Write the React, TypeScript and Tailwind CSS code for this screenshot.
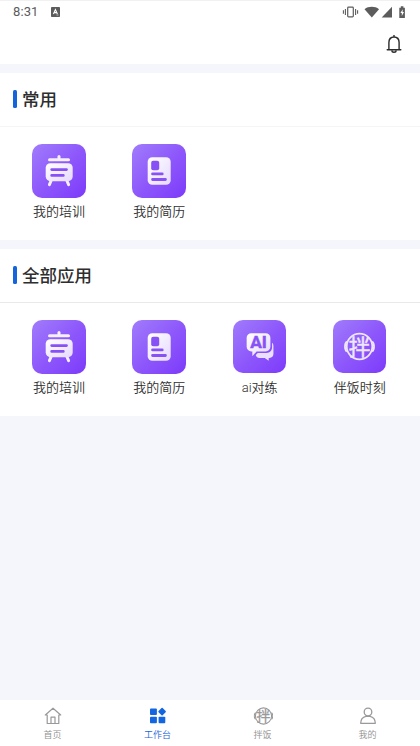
import type { ReactNode } from "react";

const FONT = "font-['Roboto','Noto_Sans_CJK_SC',sans-serif]";

function StatusBar() {
  return (
    <div className="flex h-[23px] items-center justify-between border-t border-[#f1f1f2] pl-[13px] pr-[12px] text-[#5c5c5c]">
      <div className="flex items-center gap-[13px]">
        <span className="text-[13px] leading-[22px] tracking-[0.1px]">8:31</span>
        <svg className="mb-[1px]" width="9" height="10" viewBox="0 0 9 10">
          <rect width="9" height="10" rx="0.8" fill="#5c5c5c" />
          <path d="M2.4 7 4.4 2.6 6.4 7M3.2 5.6h2.4" fill="none" stroke="#fff" strokeWidth="1.1" />
          <path d="M5.5 8h2" stroke="#ddd" strokeWidth="0.7" />
        </svg>
      </div>
      <svg className="mb-[1px]" width="66" height="14" viewBox="0 0 66 14" fill="#5c5c5c">
        <g fill="none" stroke="#5c5c5c">
          <rect x="5.7" y="2.2" width="5.6" height="9.6" rx="0.8" strokeWidth="1.2" />
          <path d="M3.4 4v6M1.4 5.3v3.4M13.6 4v6M15.6 5.3v3.4" strokeWidth="1.1" />
        </g>
        <path d="M22.5 4.2C26.5 1 33 1 37 4.2L29.8 12.6Z" />
        <path d="M50 1.8v10.7H39.7Z" />
        <path d="M57.3 2.7h1.5V1.2h2.6v1.5h1.5v10.2h-5.6z" />
        <path d="M60.7 4.2 58.4 8.1h1.4v3l2.2-4.2h-1.4z" fill="#fff" />
      </svg>
    </div>
  );
}

function Bell() {
  return (
    <svg width="16" height="20" viewBox="0 0 16 20" fill="none" stroke="#2b2b2b" strokeWidth="1.4">
      <path d="M1.2 15.8h13.6" strokeLinecap="round" />
      <path d="M2.9 15.6V8.6C2.9 5.2 5 3 8 3s5.1 2.2 5.1 5.6v7M8 1v2" />
      <path d="M5.8 16.4c.2 2.5 4.2 2.5 4.4 0" />
    </svg>
  );
}

function Tile({ small, children }: { small?: boolean; children: ReactNode }) {
  return (
    <div className="flex h-[54px] items-start justify-center">
      <div
        className={`${small ? "size-[53px]" : "size-[54px]"} overflow-hidden rounded-[10px] bg-linear-to-br from-[#a17bfb] via-[#8e58fb] to-[#7d39fa]`}
      >
        <svg className="block size-full" viewBox="0 0 54 54">
          <defs>
            <linearGradient id="pale" x1="0" y1="0" x2="1" y2="1">
              <stop offset="0" stopColor="#fff" />
              <stop offset="1" stopColor="#e6d9ff" />
            </linearGradient>
          </defs>
          {children}
        </svg>
      </div>
    </div>
  );
}

function Training() {
  return (
    <Tile>
      <g stroke="#f5efff" strokeLinecap="round" fill="none">
        <path d="M17.5 15.7h19" strokeWidth="3" />
        <path d="M27 12.6v3" strokeWidth="3" />
        <path d="m19 37-1.6 3.7M35 37l1.6 3.7" strokeWidth="3" />
      </g>
      <rect x="13.7" y="19.2" width="27" height="18" rx="4.6" fill="url(#pale)" />
      <path d="M19.7 25.6h14.8M19.7 31.4h11.6" stroke="#8751f5" strokeWidth="2.8" strokeLinecap="round" />
    </Tile>
  );
}

function Resume() {
  return (
    <Tile>
      <rect x="15.7" y="13.2" width="23" height="27.6" rx="4.6" fill="url(#pale)" />
      <rect x="19.2" y="16.8" width="8" height="9.4" rx="2" fill="#8751f5" />
      <path d="M20.6 29.9h9.6M20.6 35.5h12.8" stroke="#8751f5" strokeWidth="2.9" strokeLinecap="round" />
    </Tile>
  );
}

function AiChat() {
  return (
    <Tile small>
      <path
        d="M18.7 13.4h14.6a4.8 4.8 0 0 1 4.8 4.8v9a4.8 4.8 0 0 1-4.8 4.8H24L19.7 37v-5h-1a4.8 4.8 0 0 1-4.8-4.8v-9a4.8 4.8 0 0 1 4.8-4.8Z"
        fill="url(#pale)"
      />
      <path
        d="M39.8 23.2c.9.7 1.4 1.8 1.4 3.2v8c0 2.5-1.6 4.2-4 4.2h-.8v3L32.3 38.6H27c-1.9 0-3.3-1.1-3.8-3l2-2H34c3.6 0 5.8-2.4 5.8-5.8Z"
        fill="#ebe0ff"
      />
      <text
        x="26"
        y="29"
        textAnchor="middle"
        textLength="17"
        lengthAdjust="spacingAndGlyphs"
        className="fill-[#8751f5] stroke-[#8751f5] font-['Roboto',sans-serif] text-[17.5px] font-bold"
        strokeWidth="0.5"
      >
        AI
      </text>
    </Tile>
  );
}

function MixGlyph({ color, strokeWidth }: { color: string; strokeWidth: number }) {
  return (
    <>
      <g fill="none" stroke={color} strokeWidth={strokeWidth}>
        <circle cx="16" cy="16" r="13" />
        <path d="M3.2 10.8C.5 12.6.5 19.4 3.2 21.2M28.8 10.8c2.7 1.8 2.7 8.6 0 10.4" />
      </g>
      <text
        x="16"
        y="24.3"
        textAnchor="middle"
        fill={color}
        stroke={color}
        strokeWidth="0.5"
        className="font-['Noto_Sans_CJK_SC',sans-serif] text-[22px] font-normal"
      >
        拌
      </text>
    </>
  );
}

function MealTime() {
  return (
    <Tile small>
      <svg x="11" y="11" width="32" height="32" viewBox="0 0 32 32">
        <MixGlyph color="#eee5ff" strokeWidth={1.8} />
      </svg>
    </Tile>
  );
}

function AppItem({ label, icon }: { label: string; icon: ReactNode }) {
  return (
    <div className="flex flex-col items-center">
      {icon}
      <span className="mt-[4px] text-[13px] leading-[20px] font-[350] text-[#2e2e2e]">{label}</span>
    </div>
  );
}

function Section({ title, light, children }: { title: string; light?: boolean; children: ReactNode }) {
  return (
    <section className="h-[167px] bg-white">
      <div className={`flex h-[54px] items-center border-b pl-[13px] ${light ? "border-[#f5f5f6]" : "border-[#e9e9ea]"}`}>
        <span className="mb-[1px] h-[18px] w-[4px] rounded-[1.5px] bg-[#1664d9]" />
        <h2 className="ml-[5px] text-[17.5px] leading-[26px] font-medium text-[#2e2e2e]">{title}</h2>
      </div>
      <div className="grid grid-cols-4 pt-[17px] pr-[10px] pl-[9px]">{children}</div>
    </section>
  );
}

function NavItem({ label, active, children }: { label: string; active?: boolean; children: ReactNode }) {
  return (
    <div className={`flex flex-1 flex-col items-center pt-[6px] ${active ? "text-[#1664d9]" : "text-[#8f8f8f]"}`}>
      <svg width="20" height="20" viewBox="0 0 20 20" fill="none">
        {children}
      </svg>
      <span className="mt-[2px] text-[9px] leading-[14px] font-[350]">{label}</span>
    </div>
  );
}

export default function App() {
  return (
    <div className={`flex h-[746px] w-[420px] flex-col bg-[#f4f6fb] ${FONT}`}>
      <header className="h-[64px] bg-white">
        <StatusBar />
        <div className="flex h-[41px] items-center justify-end pr-[18px]">
          <Bell />
        </div>
      </header>
      <main className="flex flex-1 flex-col gap-[9px] pt-[9px]">
        <Section title="常用" light>
          <AppItem label="我的培训" icon={<Training />} />
          <AppItem label="我的简历" icon={<Resume />} />
        </Section>
        <Section title="全部应用">
          <AppItem label="我的培训" icon={<Training />} />
          <AppItem label="我的简历" icon={<Resume />} />
          <AppItem label="ai对练" icon={<AiChat />} />
          <AppItem label="伴饭时刻" icon={<MealTime />} />
        </Section>
      </main>
      <nav className="flex h-[46px] bg-white">
        <NavItem label="首页">
          <g stroke="#999" strokeWidth="1.2" strokeLinejoin="round" strokeLinecap="round">
            <path d="M4.2 9H2.3L10 2.2 17.7 9h-1.9v8.5H4.2Z" />
            <path d="M8 17.3v-6.2h4v6.2" />
          </g>
        </NavItem>
        <NavItem label="工作台" active>
          <g fill="#1366e0">
            <rect x="2" y="2.6" width="6.9" height="6.3" rx="0.9" />
            <rect x="2" y="10.7" width="6.9" height="6.5" rx="0.9" />
            <rect x="10.6" y="10.7" width="6.7" height="6.5" rx="0.9" />
            <rect x="11.2" y="2.7" width="5.8" height="5.8" rx="0.8" transform="rotate(45 14.1 5.6)" />
          </g>
        </NavItem>
        <NavItem label="拌饭">
          <svg x="0.5" y="0" width="20" height="20" viewBox="0 0 32 32">
            <MixGlyph color="#999" strokeWidth={1.7} />
          </svg>
        </NavItem>
        <NavItem label="我的">
          <g stroke="#999" strokeWidth="1.3" strokeLinejoin="round">
            <circle cx="10" cy="6" r="3.8" />
            <path d="M2.7 17.3c0-4.3 2.7-6.5 5.3-7h4c2.6.5 5.3 2.7 5.3 7Z" />
          </g>
        </NavItem>
      </nav>
    </div>
  );
}
